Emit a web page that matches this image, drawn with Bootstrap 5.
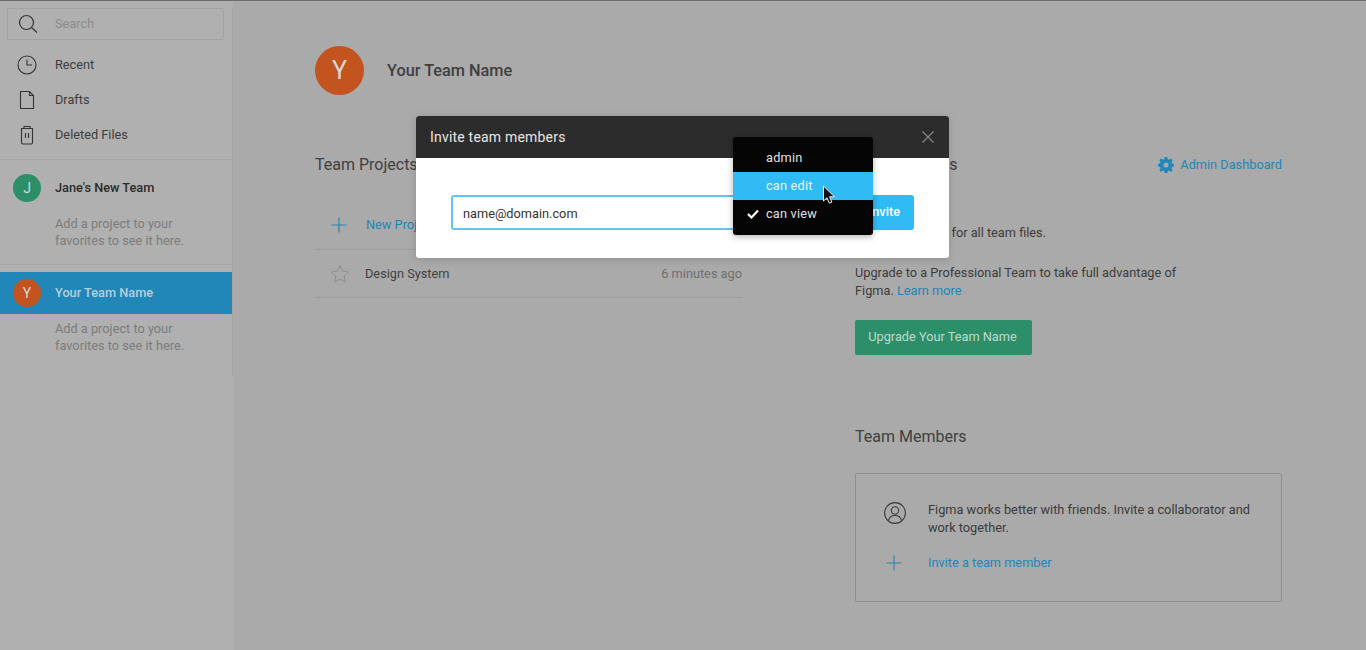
<!DOCTYPE html>
<html lang="en">
<head>
<meta charset="utf-8">
<title>Your Team Name</title>
<link rel="stylesheet" href="https://cdn.jsdelivr.net/npm/bootstrap@5.3.0/dist/css/bootstrap.min.css">
<style>
html,body{height:650px;overflow:hidden}
body{font-family:Roboto,"Liberation Sans",sans-serif;font-size:12.75px;background:#aaa;color:#3a3a3a;border-top:1px solid #6f6f6f;position:relative}
.shell{height:649px}
.side{width:233px;flex:none;background:#b0b0b0}
.side-inner{height:368px;border-right:1px solid #a2a2a2}
.search-box{height:32px;margin:7px 8px 0 7px;width:217px;border:1px solid #a3a3a3;border-radius:2px;color:#8c8c8c;padding-left:10px;gap:17px}
.nav-rows{padding-top:7px;height:112px;border-bottom:1px solid #a6a6a6;box-sizing:content-box}
.nav-row{height:35px;padding-left:17px;gap:18px;color:#3d3d3d}
.ava{border-radius:50%;color:#d8d8d8;display:flex;align-items:center;justify-content:center;flex:none;font-weight:400}
.ava-s{width:28px;height:28px;font-size:14px}
.ava-l{width:49px;height:49px;font-size:25px;color:#d9d9d9}
.bg-green{background:#2d8f6a}
.bg-orange{background:#c4541f}
.team-row{height:42px;padding-left:13px;gap:14px;font-weight:500;color:#2b2b2b}
.team-row.on{background:#2186b8;color:#b8cfdc;width:232px}
.hint{padding-left:55px;line-height:17px;color:#7c7c7c;padding-top:6px}
.team-one{padding-top:7px;height:105px;border-bottom:1px solid #a6a6a6}
.team-two{padding-top:7px}
.main-area{padding:45px 84px 0 82px;min-width:0}
.team-title{gap:23px;font-size:16.3px;font-weight:500;color:#3f3f3f;height:49px}
.team-name{padding-top:2px}
.cols{margin-top:57px;gap:113px}
.col-l,.col-r{width:427px;flex:none}
.col-h{font-size:16px;line-height:26px;color:#3f3f3f}
.tint{color:#2186b8}
.row-new{height:70px;margin-top:2px;border-bottom:1px solid #9c9c9c;padding-left:15px;gap:18px;padding-top:20px}
.row-file{height:48px;border-bottom:1px solid #9c9c9c;padding-left:15px;gap:15px;color:#404040}
.when{margin-left:auto;color:#6e6e6e}
.adm{gap:6px}
.txt{line-height:18px;color:#3c3c3c}
.txt-a{margin-top:46px}
.txt-b{margin-top:22px}
.up-btn{background:#2d8f6a;color:#c0d8ce;border-radius:2px;font-size:12.75px;font-weight:400;height:35px;width:177px;padding:0 2px 2px 0;border:0;margin-top:20px}
.mem-h{margin-top:69px}
.mem-box{margin-top:23px;height:129px;border:1px solid #8f8f8f;border-radius:2px;padding:27px 28px 0 28px}
.mem-line{gap:22px;line-height:18px}
.mem-ico{flex:none;margin-top:1px}
.mem-add{margin-top:16px;gap:25px;padding-left:1px}
.invite{position:absolute;left:416px;top:115px;width:533px;height:142px;border-radius:3px;background:#fff;box-shadow:0 2px 8px rgba(0,0,0,.15);border:0}
.invite .modal-header{height:42px;background:#2c2c2c;color:#e6e6e6;font-size:14px;letter-spacing:.2px;padding:0 15px 0 14px;border:0;border-radius:3px 3px 0 0}
.inv-body{padding:37px 35px 0 35px}
.inv-body .mail{width:300px;height:35px;border:2px solid #62c5e9;border-radius:3px;font-size:12.75px;color:#333;padding:2px 10px 0;box-shadow:none;flex:none}
.inv-body .mail::placeholder{color:#333;opacity:1}
.inv-btn{margin-left:auto;width:110px;height:35px;background:#30bbf5;color:#fff;border:0;border-radius:3px;font-size:12.75px;font-weight:500;padding:0 14px 2px 0;text-align:right}
.menu-box{position:absolute;left:733px;top:136px;width:140px;height:98px;background:#050505;border-radius:3px;padding:7px 0 0;border:0;min-width:0;display:block;box-shadow:0 2px 6px rgba(0,0,0,.3)}
.menu-box .dropdown-item{height:28px;line-height:27px;padding:0 0 0 33px;color:#e0e0e0;font-size:12.75px;letter-spacing:.2px;position:relative;background:transparent}
.menu-box .dropdown-item.lit{background:#30bbf5;color:#e8f7fd}
.tick{position:absolute;left:14px;top:9px}
.ptr{position:absolute;left:822px;top:184px;z-index:1010}
</style>
</head>
<body>
<div class="shell d-flex">
  <aside class="side">
    <div class="side-inner">
      <div class="search-box d-flex align-items-center">
        <svg width="20" height="20" viewBox="0 0 20 20" fill="none" stroke="#333" stroke-width="1.2"><circle cx="8.5" cy="8.5" r="7"/><path d="M13.5 13.500l5.500 5"/></svg>
        <span>Search</span>
      </div>
      <div class="nav-rows">
        <div class="nav-row d-flex align-items-center">
          <svg width="20" height="20" viewBox="0 0 20 20" fill="none" stroke="#333" stroke-width="1.1"><circle cx="10" cy="10" r="9"/><path d="M10 4.500V10h5"/></svg>
          <span>Recent</span></div>
        <div class="nav-row d-flex align-items-center">
          <svg width="20" height="20" viewBox="0 0 20 20" fill="none" stroke="#333" stroke-width="1.1"><path d="M3.500 1.500h9l4 4v13h-13zM12.500 1.500v4h4"/></svg>
          <span>Drafts</span></div>
        <div class="nav-row d-flex align-items-center">
          <svg width="20" height="20" viewBox="0 0 20 20" fill="none" stroke="#333" stroke-width="1.1"><path d="M4.500 4v13.500a1.500 1.500 0 0 0 1.500 1.500h8a1.500 1.500 0 0 0 1.500-1.500V4M4 3.500h12M7 3.200V1.500h6v1.700M8.500 8v5M11.500 8v5"/></svg>
          <span>Deleted Files</span></div>
      </div>
      <div class="team-one">
        <div class="team-row d-flex align-items-center"><div class="ava ava-s bg-green">J</div><span>Jane's New Team</span></div>
        <div class="hint">Add a project to your<br>favorites to see it here.</div>
      </div>
      <div class="team-two">
        <div class="team-row on d-flex align-items-center"><div class="ava ava-s bg-orange">Y</div><span>Your Team Name</span></div>
        <div class="hint">Add a project to your<br>favorites to see it here.</div>
      </div>
    </div>
  </aside>
  <main class="main-area flex-grow-1">
    <div class="team-title d-flex align-items-center"><div class="ava ava-l bg-orange">Y</div><span class="team-name">Your Team Name</span></div>
    <div class="cols d-flex">
      <section class="col-l">
        <div class="col-h">Team Projects</div>
        <div class="row-new d-flex align-items-center tint">
          <svg width="18" height="18" viewBox="0 0 18 18" fill="none" stroke="#2186b8" stroke-width="1.2"><path d="M9 1.500v15M1.500 9h15"/></svg>
          <span>New Project</span>
        </div>
        <div class="row-file d-flex align-items-center">
          <svg width="20" height="20" viewBox="0 0 20 20" fill="none" stroke="#8e8e8e" stroke-width="1"><path d="M10 1.500l2.600 5.600 6 .8-4.400 4.200 1.100 6-5.300-3-5.300 3 1.100-6L1.400 7.900l6-.8z"/></svg>
          <span>Design System</span><span class="when">6 minutes ago</span>
        </div>
      </section>
      <section class="col-r">
        <div class="d-flex justify-content-between align-items-center">
          <div class="col-h">Team Settings</div>
          <div class="adm tint d-flex align-items-center">
            <svg width="16" height="16" viewBox="0 0 16 16"><path fill="#2186b8" fill-rule="evenodd" d="M6.700 0h2.600l.4 2.200 1.300.6 1.900-1.300 1.800 1.800-1.300 1.900.6 1.300 2 .4v2.600l-2 .4-.6 1.300 1.300 1.900-1.800 1.800-1.900-1.300-1.300.6-.4 2.200H6.700l-.4-2.200-1.300-.6-1.900 1.300-1.800-1.800 1.300-1.900-.6-1.300-2-.4V6.900l2-.4.6-1.300-1.300-1.900 1.800-1.800L5 2.800l1.300-.6zM8 5.500a2.500 2.500 0 1 0 0 5 2.500 2.500 0 0 0 0-5z"/></svg>
            <span>Admin Dashboard</span>
          </div>
        </div>
        <div class="txt txt-a">Limited versions for all team files.</div>
        <div class="txt txt-b">Upgrade to a Professional Team to take full advantage of<br>Figma. <span class="tint">Learn more</span></div>
        <button class="btn up-btn" type="button">Upgrade Your Team Name</button>
        <div class="col-h mem-h">Team Members</div>
        <div class="mem-box">
          <div class="mem-line d-flex">
            <svg class="mem-ico" width="22" height="22" viewBox="0 0 22 22" fill="none" stroke="#3a3a3a" stroke-width="1.1"><circle cx="11" cy="11" r="10.400"/><circle cx="11" cy="8.500" r="3.700"/><path d="M4.500 18.500c.8-3.500 3.300-5 6.500-5s5.700 1.500 6.500 5"/></svg>
            <div>Figma works better with friends. Invite a collaborator and work together.</div>
          </div>
          <div class="mem-add d-flex align-items-center tint">
            <svg width="18" height="18" viewBox="0 0 18 18" fill="none" stroke="#2186b8" stroke-width="1.1"><path d="M9 1.500v15M1.500 9h15"/></svg>
            <span>Invite a team member</span>
          </div>
        </div>
      </section>
    </div>
  </main>
</div>

<div class="invite modal-content">
  <div class="modal-header d-flex justify-content-between align-items-center">
    <span>Invite team members</span>
    <svg width="12" height="12" viewBox="0 0 12 12" fill="none" stroke="#8a8a8a" stroke-width="1.1"><path d="M.5.500l11 11M11.500.500l-11 11"/></svg>
  </div>
  <div class="inv-body d-flex">
    <input class="form-control mail" type="text" placeholder="name@domain.com">
    <button class="btn inv-btn" type="button">Invite</button>
  </div>
</div>
<div class="dropdown-menu menu-box">
  <a class="dropdown-item" href="#">admin</a>
  <a class="dropdown-item lit" href="#">can edit</a>
  <a class="dropdown-item" href="#"><svg class="tick" width="12" height="10" viewBox="0 0 12 10" fill="none" stroke="#fff" stroke-width="2.200"><path d="M1 5l3.500 3.500L11 1.500"/></svg>can view</a>
</div>
<svg class="ptr" width="15" height="21" viewBox="0 0 15 21"><path d="M1.500 1v15l3.500-3.200 2.300 5.400 2.600-1.100-2.300-5.300h4.900z" fill="#111" stroke="#eee" stroke-width="1"/></svg>
<script src="https://cdn.jsdelivr.net/npm/bootstrap@5.3.0/dist/js/bootstrap.bundle.min.js"></script>
</body>
</html>
